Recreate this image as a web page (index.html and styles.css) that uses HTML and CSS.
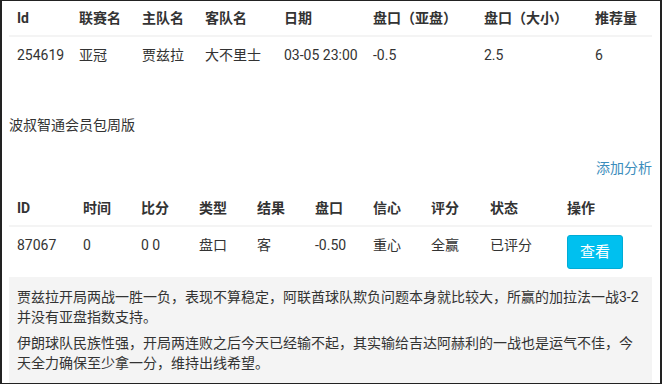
FILE: index.html
```html
<!DOCTYPE html>
<html lang="zh-CN">
<head>
<meta charset="utf-8">
<title>推荐</title>
<link rel="stylesheet" href="styles.css">
</head>
<body>
<div class="wrap">
  <table class="grid">
    <colgroup>
      <col style="width:62px"><col style="width:63px"><col style="width:63px"><col style="width:79px">
      <col style="width:89px"><col style="width:111px"><col style="width:111px"><col style="width:65px">
    </colgroup>
    <thead>
      <tr><th>Id</th><th>联赛名</th><th>主队名</th><th>客队名</th><th>日期</th><th>盘口（亚盘）</th><th>盘口（大小）</th><th>推荐量</th></tr>
    </thead>
    <tbody>
      <tr><td>254619</td><td>亚冠</td><td>贾兹拉</td><td>大不里士</td><td>03-05 23:00</td><td>-0.5</td><td>2.5</td><td>6</td></tr>
    </tbody>
  </table>

  <div class="member">波叔智通会员包周版</div>
  <div class="actions"><a class="link" href="#">添加分析</a></div>

  <table class="grid second">
    <colgroup>
      <col style="width:66px"><col style="width:58px"><col style="width:58px"><col style="width:58px"><col style="width:58px">
      <col style="width:58px"><col style="width:58px"><col style="width:59px"><col style="width:77px"><col style="width:93px">
    </colgroup>
    <thead>
      <tr><th>ID</th><th>时间</th><th>比分</th><th>类型</th><th>结果</th><th>盘口</th><th>信心</th><th>评分</th><th>状态</th><th>操作</th></tr>
    </thead>
    <tbody>
      <tr><td>87067</td><td>0</td><td>0 0</td><td>盘口</td><td>客</td><td>-0.50</td><td>重心</td><td>全赢</td><td>已评分</td><td><button class="btn" type="button">查看</button></td></tr>
    </tbody>
  </table>

  <div class="analysis">
    <p>贾兹拉开局两战一胜一负，表现不算稳定，阿联酋球队欺负问题本身就比较大，所赢的加拉法一战3-2并没有亚盘指数支持。</p>
    <p>伊朗球队民族性强，开局两连败之后今天已经输不起，其实输给吉达阿赫利的一战也是运气不佳，今天全力确保至少拿一分，维持出线希望。</p>
  </div>
</div>
</body>
</html>
```

FILE: styles.css
```css
html, body {
  margin: 0;
  padding: 0;
  background: #fff;
}

body {
  font-family: Roboto, "Noto Sans CJK SC", sans-serif;
  font-size: 14px;
  line-height: 20px;
  color: #333;
}

.wrap {
  box-sizing: border-box;
  width: 662px;
  height: 384px;
  overflow: hidden;
  border-top: 1px solid #222;
  border-left: 2px solid #222;
  border-right: 2px solid #222;
  border-bottom: 1px solid #222;
  padding: 0 8px 0 7px;
}

.grid {
  width: 643px;
  table-layout: fixed;
  border-collapse: collapse;
  border-spacing: 0;
}

.grid th {
  text-align: left;
  font-weight: bold;
  padding: 7px 8px;
  border-bottom: 2px solid #f4f4f4;
  white-space: nowrap;
}

.grid td {
  text-align: left;
  vertical-align: top;
  padding: 8px;
  white-space: nowrap;
}

.member {
  margin-top: 42px;
}

.actions {
  margin-top: 23px;
  text-align: right;
}

.link {
  color: #3c8dbc;
  text-decoration: none;
}

.second {
  margin-top: 13px;
}

.btn {
  box-sizing: border-box;
  height: 34px;
  padding: 6px 12px;
  font-family: inherit;
  font-size: 15px;
  line-height: 20px;
  color: #fff;
  background: #00c0ef;
  border: 1px solid #00acd6;
  border-radius: 3px;
  cursor: pointer;
}

.analysis {
  background: #f4f4f4;
  padding: 10px 8px;
}

.analysis p {
  margin: 0 0 6px;
}
```
